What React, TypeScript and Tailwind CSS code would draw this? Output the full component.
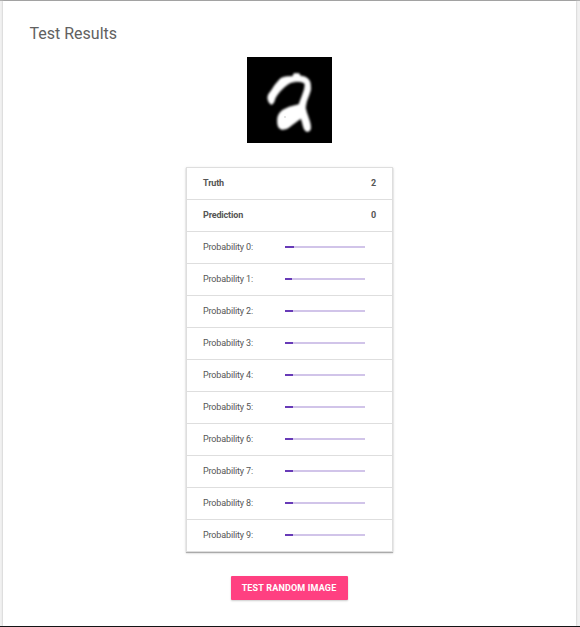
const bars = [9, 7, 8, 8, 8, 8, 8, 8, 8, 8];

function Digit() {
  return (
    <svg width="85" height="86" viewBox="0 0 85 86" className="mt-[13px] block bg-black">
      <defs>
        <filter id="soft" x="-10%" y="-10%" width="120%" height="120%">
          <feGaussianBlur stdDeviation="0.9" />
        </filter>
      </defs>
      <path
        filter="url(#soft)"
        fill="#fff"
        stroke="#fff"
        strokeWidth="0.6"
        strokeLinejoin="round"
        d="M20.8 42 Q20 38 24 34 Q28 27 33 22 Q36 19 45.5 19.5 L47 16.5 L52 16.5 L53.5 19 Q61 19.5 63 25 Q65 32 62 38 Q58.5 46 58.5 51 C59.5 57 63.5 64 63.7 70 Q63.8 75 59.5 74.5 C56 73 56.2 66 53.8 61.5 L45 68 Q40 73 34.5 72.5 Q30.5 71 30.5 66 Q29.5 58 35 53.5 Q41 49.5 52 47.5 C53 43 57.8 34 58 28 Q58 24.5 50 24.5 Q43 24.5 38 29.5 Q31 35.5 28.3 41 Q26.5 48 24 47.5 Q21.5 46 20.8 42 Z"
      />
      <path d="M37 59 h2 v2 h-2z" fill="#e4e4e4" />
    </svg>
  );
}

export default function App() {
  return (
    <div className="flex h-[627px] flex-col border-t border-b border-t-[#b0b0b0] border-b-[#161618] bg-[#f1f1f1] pr-1 pl-[3px] font-['Roboto',sans-serif]">
      <main className="flex flex-1 flex-col items-center bg-white shadow-[0_0_2px_rgba(0,0,0,0.25)]">
        <h1 className="mt-[23px] h-5 w-full pl-[26.5px] text-[16px] leading-5 text-[#616161]">Test Results</h1>
        <Digit />
        <div className="mt-6 mr-px w-[207px] border border-[#dedede] bg-white text-[9px] tracking-[-0.15px] text-[#555] shadow-[0_1px_1px_rgba(0,0,0,0.28),0_1px_3px_rgba(0,0,0,0.12)]">
          <div className="flex h-8 items-center justify-between border-b border-[#dedede] pr-[15.5px] pl-[16.5px] font-bold">
            <span>Truth</span>
            <span>2</span>
          </div>
          <div className="flex h-8 items-center justify-between border-b border-[#dedede] pr-[15.5px] pl-[16.5px] font-bold">
            <span>Prediction</span>
            <span>0</span>
          </div>
          {bars.map((width, index) => (
            <div key={index} className="flex h-8 items-center border-b border-[#dedede] pl-[16.5px] last:h-[31px] last:border-b-0">
              <span className="w-[81.5px]">Probability {index}:</span>
              <div className="mb-[1px] h-[2px] w-20 bg-[#d1c4e9]">
                <div className="h-full bg-[#673ab7]" style={{ width }} />
              </div>
            </div>
          ))}
        </div>
        <button className="mt-6 mr-px h-6 w-[117px] rounded-[1px] bg-[#ff4081] pt-px text-[9px] font-bold tracking-[0.17px] text-white shadow-[0_1px_2px_rgba(0,0,0,0.2)]">
          TEST RANDOM IMAGE
        </button>
      </main>
    </div>
  );
}
